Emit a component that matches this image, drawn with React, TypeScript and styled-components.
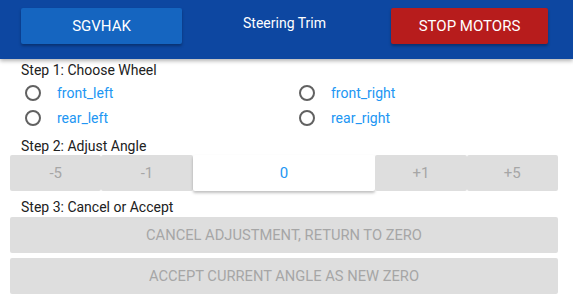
import React, { useState } from 'react'
import styled, { createGlobalStyle } from 'styled-components'

const GlobalStyle = createGlobalStyle`
  html, body {
    margin: 0;
    padding: 0;
    background: #fff;
    font-family: Roboto, "Liberation Sans", sans-serif;
  }
`

const wheels = ['front_left', 'front_right', 'rear_left', 'rear_right']
const steps = [
  { label: '-5', wide: false },
  { label: '-1', wide: false },
  { label: '0', wide: true },
  { label: '+1', wide: false },
  { label: '+5', wide: false },
]

const App: React.FC = () => {
  const [wheel, setWheel] = useState<string | null>(null)

  return (
    <>
      <GlobalStyle />
      <StyledHeader>
        <StyledHeaderButton $color="#1565c0" $width={161}>SGVHAK</StyledHeaderButton>
        <StyledTitle>Steering Trim</StyledTitle>
        <StyledHeaderButton $color="#b71c1c" $width={157}>STOP MOTORS</StyledHeaderButton>
      </StyledHeader>
      <StyledContent>
        <StyledStep>Step 1: Choose Wheel</StyledStep>
        <StyledWheelGrid>
          {wheels.map((w) => (
            <StyledRadioRow key={w} onClick={() => setWheel(w)}>
              <StyledRadio $checked={wheel === w} />
              <StyledRadioLabel>{w}</StyledRadioLabel>
            </StyledRadioRow>
          ))}
        </StyledWheelGrid>
        <StyledStep>Step 2: Adjust Angle</StyledStep>
        <StyledAngleGroup>
          {steps.map((s) => (
            <StyledAngleButton key={s.label} $active={s.wide}>
              {s.label}
            </StyledAngleButton>
          ))}
        </StyledAngleGroup>
        <StyledStep>Step 3: Cancel or Accept</StyledStep>
        <StyledActions>
          <StyledWideButton disabled>Cancel adjustment, return to zero</StyledWideButton>
          <StyledWideButton disabled>Accept current angle as new zero</StyledWideButton>
        </StyledActions>
      </StyledContent>
    </>
  )
}

export default App

const StyledHeader = styled.header`
  display: flex;
  align-items: flex-start;
  height: 59px;
  padding: 8px 25px 0 21px;
  box-sizing: border-box;
  background: #0d47a1;
  box-shadow: 0 2px 4px rgba(0, 0, 0, 0.3);
  position: relative;
  z-index: 1;
`

const StyledHeaderButton = styled.button<{ $color: string; $width: number }>`
  width: ${(p) => p.$width}px;
  height: 36px;
  padding: 0;
  border: none;
  border-radius: 2px;
  background: ${(p) => p.$color};
  color: #fff;
  font-family: Roboto, "Liberation Sans", sans-serif;
  font-size: 15px;
  font-weight: 400;
  text-transform: uppercase;
  box-shadow: 0 2px 3px rgba(0, 0, 0, 0.3);
  cursor: pointer;
`

const StyledTitle = styled.div`
  flex: 1;
  text-align: center;
  padding: 5px 4px 0 0;
  color: #fff;
  font-size: 14px;
  line-height: 20px;
`

const StyledContent = styled.main`
  padding: 2px 15px 0 10px;
`

const StyledStep = styled.div`
  padding-left: 11px;
  color: #212121;
  font-size: 14px;
  line-height: 18px;
`

const StyledWheelGrid = styled.div`
  display: grid;
  grid-template-columns: 1fr 1fr;
  padding: 1px 0 7px;
`

const StyledRadioRow = styled.label`
  display: flex;
  align-items: center;
  height: 25px;
  padding-left: 15px;
  gap: 16px;
  cursor: pointer;
`

const StyledRadio = styled.span<{ $checked: boolean }>`
  width: 12px;
  height: 12px;
  border: 2px solid #616161;
  border-radius: 50%;
  box-sizing: content-box;
  background: ${(p) => (p.$checked ? 'radial-gradient(#2196f3 45%, transparent 50%)' : 'transparent')};
`

const StyledRadioLabel = styled.span`
  color: #2196f3;
  font-size: 14px;
`

const StyledAngleGroup = styled.div`
  display: flex;
  height: 36px;
  margin-bottom: 7px;
`

const StyledAngleButton = styled.button<{ $active: boolean }>`
  flex: ${(p) => (p.$active ? 2 : 1)} 1 0;
  min-width: 0;
  padding: 0;
  border: none;
  border-radius: 2px;
  background: ${(p) => (p.$active ? '#fff' : '#dedede')};
  color: ${(p) => (p.$active ? '#2196f3' : '#a6a6a6')};
  font-family: Roboto, "Liberation Sans", sans-serif;
  font-size: 15px;
  box-shadow: ${(p) => (p.$active ? '0 2px 3px rgba(0, 0, 0, 0.25)' : 'none')};
  cursor: pointer;
`

const StyledActions = styled.div`
  display: flex;
  flex-direction: column;
  gap: 5px;
  margin-top: 1px;
`

const StyledWideButton = styled.button`
  height: 36px;
  padding: 0;
  border: none;
  border-radius: 2px;
  background: #dedede;
  color: #a6a6a6;
  font-family: Roboto, "Liberation Sans", sans-serif;
  font-size: 14.7px;
  font-weight: 400;
  text-transform: uppercase;
`
